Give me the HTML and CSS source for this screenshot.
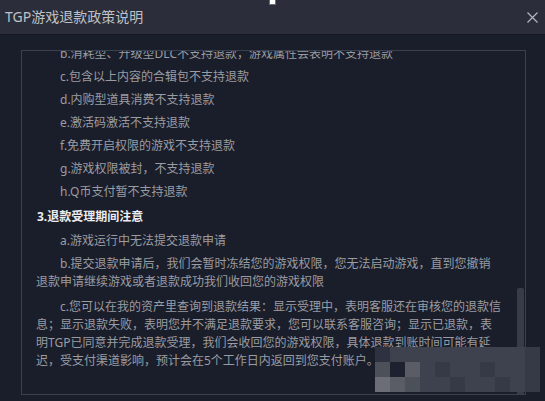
FILE: index.html
```html
<!DOCTYPE html>
<html lang="zh-CN">
<head>
<meta charset="utf-8">
<title>TGP游戏退款政策说明</title>
<link rel="stylesheet" href="styles.css">
</head>
<body>
<div class="dialog">
  <header class="titlebar">
    <h1 class="title">TGP游戏退款政策说明</h1>
    <button class="close" aria-label="关闭">
      <svg width="11" height="11" viewBox="0 0 11 11"><path d="M0.5 0.5L10.5 10.5M10.5 0.5L0.5 10.5" stroke="#b4b6bd" stroke-width="1.2" fill="none"/></svg>
    </button>
    <span class="marker"></span>
  </header>
  <main class="content">
    <div class="box">
      <div class="scroll">
        <p class="item">b.消耗型、升级型DLC不支持退款，游戏属性会表明不支持退款</p>
        <p class="item">c.包含以上内容的合辑包不支持退款</p>
        <p class="item">d.内购型道具消费不支持退款</p>
        <p class="item">e.激活码激活不支持退款</p>
        <p class="item">f.免费开启权限的游戏不支持退款</p>
        <p class="item">g.游戏权限被封，不支持退款</p>
        <p class="item">h.Q币支付暂不支持退款</p>
        <h2 class="heading">3.退款受理期间注意</h2>
        <p class="item">a.游戏运行中无法提交退款申请</p>
        <p class="para">b.提交退款申请后，我们会暂时冻结您的游戏权限，您无法启动游戏，直到您撤销退款申请继续游戏或者退款成功我们收回您的游戏权限</p>
        <p class="para">c.您可以在我的资产里查询到退款结果：显示受理中，表明客服还在审核您的退款信息；显示退款失败，表明您并不满足退款要求，您可以联系客服咨询；显示已退款，表明TGP已同意并完成退款受理，我们会收回您的游戏权限，具体退款到账时间可能有延迟，受支付渠道影响，预计会在5个工作日内返回到您支付账户。</p>
      </div>
      <div class="thumb"></div>
    </div>
    <div class="mosaic">
      <i class="m0"></i><i class="m2"></i><i class="m2"></i><i class="m2"></i><i class="m2"></i><i class="m2"></i><i class="m2"></i><i class="m2"></i><i class="m2"></i><i class="m2"></i><i class="m1"></i>
      <i class="m3"></i><i class="m5"></i><i class="m4"></i><i class="m2"></i><i class="m1"></i><i class="m2"></i><i class="m2"></i><i class="m1"></i><i class="m2"></i><i class="m2"></i><i class="m1"></i>
      <i class="m6"></i><i class="m4"></i><i class="m3"></i><i class="m2"></i><i class="m2"></i><i class="m1"></i><i class="m2"></i><i class="m2"></i><i class="m1"></i><i class="m2"></i><i class="m1"></i>
    </div>
  </main>
</div>
</body>
</html>
```

FILE: styles.css
```css
* { box-sizing: border-box; }
html, body {
  margin: 0;
  padding: 0;
  background: #1a1e2a;
}
body {
  width: 545px;
  height: 401px;
  overflow: hidden;
  font-family: "Noto Sans", "Noto Sans CJK SC", sans-serif;
}
.dialog {
  width: 545px;
  height: 401px;
  display: flex;
  flex-direction: column;
}
.titlebar {
  position: relative;
  height: 35px;
  flex: none;
  background: #2b2e3a;
  border-bottom: 1px solid #15181f;
  display: flex;
  align-items: center;
  justify-content: space-between;
  padding: 0 7px 0 5px;
}
.title {
  margin: 0;
  font-size: 14px;
  font-weight: normal;
  color: #bfc1c7;
  line-height: 20px;
  margin-top: -1px;
}
.close {
  border: 0;
  background: none;
  padding: 0;
  width: 11px;
  height: 11px;
  display: flex;
}
.marker {
  position: absolute;
  left: 269px;
  top: 0;
  width: 7px;
  height: 5px;
  background: #ffffff;
  border: 1px solid #6a6c74;
  border-top: 0;
}
.content {
  position: relative;
  flex: 1;
  padding: 15px 19px 0 21px;
}
.box {
  position: relative;
  height: 345px;
  border: 1px solid #3b404d;
  overflow: hidden;
  padding: 0 23px 0 14px;
}
.scroll {
  margin-top: -6px;
}
.item, .para, .heading {
  margin: 0 0 5px;
  font-size: 12px;
  line-height: 18px;
  color: #9a9ca3;
}
.item {
  padding-left: 24px;
}
.heading {
  margin: 7px 0 6px;
  padding-left: 1px;
  color: #ececee;
  font-weight: bold;
}
.para {
  text-indent: 24px;
  margin-bottom: 7px;
}
.thumb {
  position: absolute;
  left: 495px;
  top: 237px;
  width: 7px;
  height: 110px;
  background: #383c48;
  border-radius: 2px;
}
.mosaic {
  position: absolute;
  left: 375px;
  top: 312px;
  display: grid;
  grid-template-columns: repeat(11, 15px);
  grid-auto-rows: 15px;
}
.mosaic i { display: block; }
.m0 { background: #2e3240; }
.m1 { background: #363a46; }
.m2 { background: #3e424e; }
.m3 { background: #4c5059; }
.m4 { background: #5a5d66; }
.m5 { background: #1e2230; }
.m6 { background: #6b6e76; }
```
